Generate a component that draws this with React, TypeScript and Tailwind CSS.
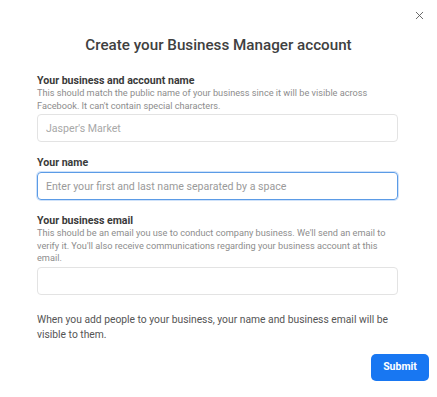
import { X } from 'lucide-react'

function Field({
  label,
  hint,
  placeholder,
  focused,
}: {
  label: string
  hint?: string
  placeholder?: string
  focused?: boolean
}) {
  return (
    <div className="flex flex-col">
      <label className="text-[10.6px] font-bold leading-[14px] text-[#3a3a3a]">{label}</label>
      {hint && (
        <p className="-mt-[1px] text-[9.2px] leading-[12.5px] text-[#8d8d8d]">{hint}</p>
      )}
      <input
        type="text"
        placeholder={placeholder}
        className={
          focused
            ? 'mt-[2px] h-[28px] w-full rounded-[4px] border border-[#5b9be6] px-[8px] text-[10.6px] text-[#333] outline-none placeholder:text-[#9a9a9a] shadow-[0_0_0_1px_#cfe2fa]'
            : 'mt-[2px] h-[28px] w-full rounded-[4px] border border-[#e3e3e3] px-[8px] text-[10.6px] text-[#333] outline-none placeholder:text-[#a8a8a8]'
        }
      />
    </div>
  )
}

export default function App() {
  return (
    <div className="h-[397px] w-[437px] bg-white" style={{ fontFamily: 'Roboto, "Liberation Sans", sans-serif' }}>
      <div className="flex justify-end pr-[11px] pt-[9px]">
        <button className="text-[#555]">
          <X size={13} strokeWidth={1.6} />
        </button>
      </div>

      <h1 className="mt-[13px] text-center text-[15.2px] font-medium leading-[20px] text-[#404040]">
        Create your Business Manager account
      </h1>

      <div className="mt-[19px] flex flex-col gap-[14px] pl-[37px] pr-[39px]">
        <Field
          label="Your business and account name"
          hint="This should match the public name of your business since it will be visible across Facebook. It can't contain special characters."
          placeholder="Jasper's Market"
        />
        <Field label="Your name" placeholder="Enter your first and last name separated by a space" focused />
        <Field
          label="Your business email"
          hint="This should be an email you use to conduct company business. We'll send an email to verify it. You'll also receive communications regarding your business account at this email."
        />
        <p className="mt-[3px] text-[10.3px] leading-[15px] text-[#555]">
          When you add people to your business, your name and business email will be visible to them.
        </p>
      </div>

      <div className="mt-[12px] flex justify-end pr-[8px]">
        <button className="h-[27px] w-[58px] rounded-[5px] bg-[#1877f2] text-[10.5px] font-bold text-white">
          Submit
        </button>
      </div>
    </div>
  )
}
